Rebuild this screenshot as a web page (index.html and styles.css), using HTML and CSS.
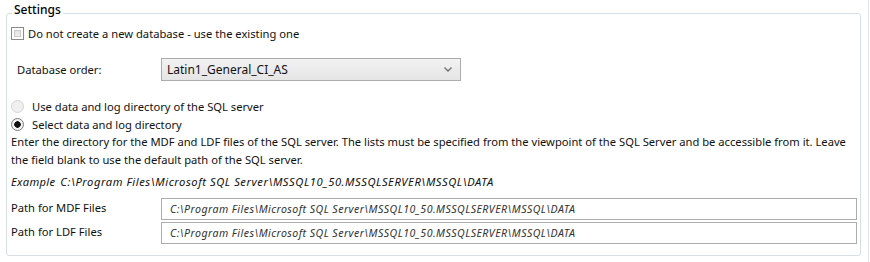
FILE: index.html
```html
<!DOCTYPE html>
<html lang="en">
<head>
  <meta charset="UTF-8" />
  <title>Settings</title>
  <link rel="stylesheet" href="styles.css">
</head>
<body>
  <div class="page">
    <fieldset class="settings">
      <legend>Settings</legend>

      <label class="check-row">
        <input type="checkbox" class="check">
        <span>Do not create a new database - use the existing one</span>
      </label>

      <div class="order-row">
        <span class="order-label">Database order:</span>
        <div class="combo">
          <span>Latin1_General_CI_AS</span>
          <svg class="chevron" width="8" height="5" viewBox="0 0 8 5">
            <polyline points="0.5,0.5 4,4 7.5,0.5" fill="none" stroke="#6d6d6d" stroke-width="1.3"/>
          </svg>
        </div>
      </div>

      <div class="radios">
        <label class="radio-row"><span class="radio"></span>Use data and log directory of the SQL server</label>
        <label class="radio-row"><span class="radio checked"></span>Select data and log directory</label>
      </div>

      <p class="hint">Enter the directory for the MDF and LDF files of the SQL server. The lists must be specified from the viewpoint of the SQL Server and be accessible from it. Leave the field blank to use the default path of the SQL server.</p>

      <p class="example"><em class="example-tag">Example</em><em>C:\Program Files\Microsoft SQL Server\MSSQL10_50.MSSQLSERVER\MSSQL\DATA</em></p>

      <div class="paths">
        <div class="path-row">
          <span class="path-label">Path for MDF Files</span>
          <div class="path-box">C:\Program Files\Microsoft SQL Server\MSSQL10_50.MSSQLSERVER\MSSQL\DATA</div>
        </div>
        <div class="path-row">
          <span class="path-label">Path for LDF Files</span>
          <div class="path-box">C:\Program Files\Microsoft SQL Server\MSSQL10_50.MSSQLSERVER\MSSQL\DATA</div>
        </div>
      </div>
    </fieldset>
  </div>
</body>
</html>
```

FILE: styles.css
```css
body {
  margin: 0;
  font-family: 'Noto Sans', 'Open Sans', sans-serif;
  font-size: 11.2px;
  color: #111;
  background-color: #ffffff;
}

.page {
  width: 869px;
  height: 262px;
  border-right: 1px solid #dfe6ec;
  padding-top: 2px;
  box-sizing: border-box;
}

.settings {
  margin: 0 7px 0 6px;
  padding: 0 3px 11px 4px;
  border: 1px solid #d5dfe5;
  border-radius: 3px;
}

.settings legend {
  margin-left: 1px;
  padding: 0 2px 6px;
  line-height: 16px;
  font-size: 12px;
  font-weight: 500;
  color: #000;
}

/* checkbox */
.check-row {
  display: flex;
  align-items: center;
  height: 19px;
  gap: 4px;
}

.check {
  appearance: none;
  margin: 0;
  width: 13px;
  height: 13px;
  border: 1px solid #8a8a8a;
  background: linear-gradient(to bottom, #dedede, #f4f4f4);
  box-shadow: inset 0 0 0 2px #fff, inset 0 0 0 3px #c9c9c9;
}

/* collation combo */
.order-row {
  display: flex;
  align-items: center;
  margin-top: 15px;
}

.order-label {
  width: 144px;
  margin-left: 6px;
}

.combo {
  display: flex;
  align-items: center;
  justify-content: space-between;
  width: 300px;
  height: 23px;
  box-sizing: border-box;
  padding: 0 6px 0 5px;
  border: 1px solid #acacac;
  background: linear-gradient(to bottom, #f2f2f2, #e5e5e5);
  font-size: 12px;
}

.chevron {
  margin-right: 2px;
}

/* radios */
.radios {
  margin-top: 16px;
  display: flex;
  flex-direction: column;
}

.radio-row {
  display: flex;
  align-items: center;
  height: 18px;
  gap: 8px;
}

.radio {
  width: 13px;
  height: 13px;
  box-sizing: border-box;
  border-radius: 50%;
  border: 1px solid #d4d4d4;
  background: #f0f0f0;
}

.radio.checked {
  border-color: #7a7a7a;
  background: radial-gradient(circle, #111 0 3px, #f2f2f2 3.5px);
}

/* description */
.hint {
  margin: 0;
  line-height: 18px;
  padding-right: 6px;
}

.example {
  margin: 5px 0 0;
  display: flex;
  align-items: baseline;
  gap: 5px;
  letter-spacing: 0.55px;
}

.example-tag {
  letter-spacing: 0.3px;
}

/* path inputs */
.paths {
  margin-top: 9px;
  display: flex;
  flex-direction: column;
  gap: 2px;
}

.path-row {
  display: flex;
  align-items: center;
}

.path-label {
  width: 150px;
  align-self: flex-start;
  margin-top: 2px;
}

.path-box {
  flex: 1;
  height: 22px;
  box-sizing: border-box;
  padding: 0 8px;
  display: flex;
  align-items: center;
  border: 1px solid #acacac;
  font-style: italic;
  font-size: 10.6px;
  letter-spacing: 0.45px;
  color: #333;
}
```
